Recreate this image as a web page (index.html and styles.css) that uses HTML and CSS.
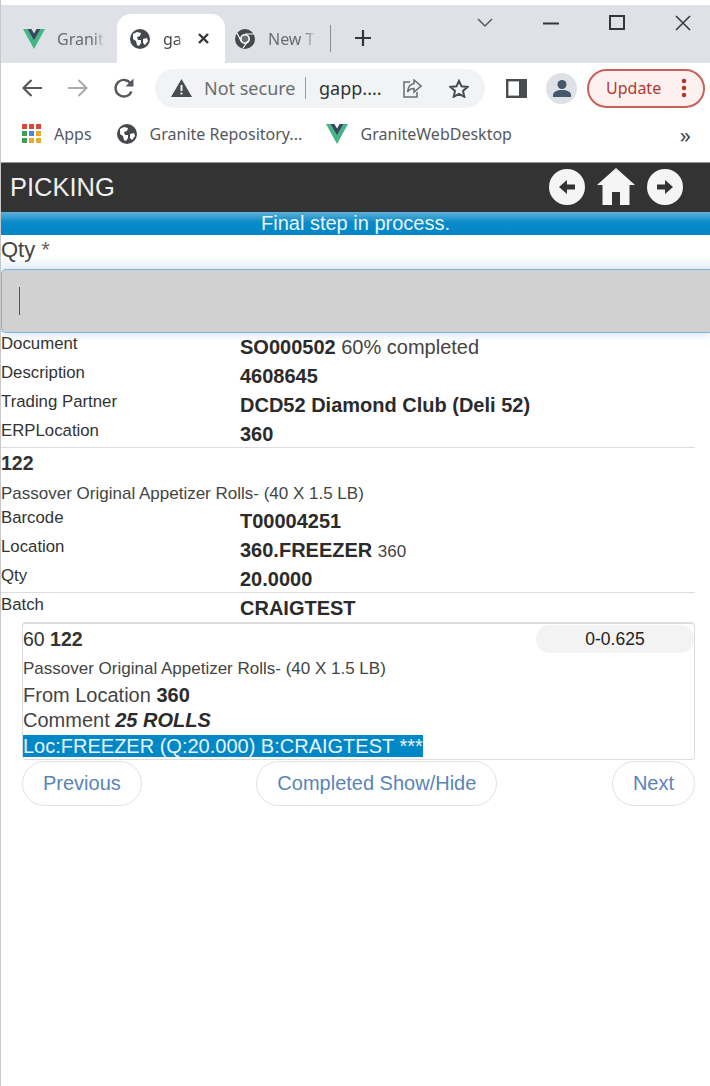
FILE: index.html
```html
<!DOCTYPE html>
<html lang="en">
<head>
  <meta charset="UTF-8" />
  <meta name="viewport" content="width=device-width, initial-scale=1.0" />
  <title>Picking</title>
  <link rel="stylesheet" href="styles.css">
</head>
<body>
  <svg class="defs" width="0" height="0">
    <symbol id="vue" viewBox="0 0 22 20">
      <path fill="#41b883" d="M0 0h4.4L11 11.4 17.6 0H22L11 20z"/>
      <path fill="#35495e" d="M4.4 0h4L11 4.6 13.6 0h4L11 11.4z"/>
    </symbol>
    <symbol id="globe" viewBox="0 0 20 20">
      <circle cx="10" cy="10" r="10" fill="#45494d"/>
      <path fill="#fff" d="M3 5l4-2 4 1-1 3-3 1 1 3 3 0 0 3-2 3-2-1-1-4-3-2zM13 10l4-1 1 3-3 4-2-2z"/>
    </symbol>
  </svg>

  <div class="tabstrip">
    <div class="tab">
      <svg class="fav" width="22" height="20"><use href="#vue"/></svg>
      <span class="tab-title tab-first">Granit</span>
    </div>
    <div class="tab active">
      <svg class="fav" width="20" height="20"><use href="#globe"/></svg>
      <span class="tab-title tab-mid">ga</span>
      <svg class="tab-close" width="11" height="11" viewBox="0 0 11 11"><path d="M1 1l9 9M10 1l-9 9" stroke="#33373b" stroke-width="2.4"/></svg>
    </div>
    <div class="tab">
      <svg class="fav" width="20" height="20" viewBox="0 0 20 20">
        <circle cx="10" cy="10" r="10" fill="#45494d"/>
        <circle cx="10" cy="10" r="5" fill="#fff"/>
        <circle cx="10" cy="10" r="3.4" fill="#6b7075"/>
        <path d="M10 5h9M6 12L2 4M13 12l-5 7" stroke="#fff" stroke-width="1.2"/>
      </svg>
      <span class="tab-title tab-last">New T</span>
    </div>
    <span class="tab-sep"></span>
    <svg class="new-tab" width="18" height="18" viewBox="0 0 18 18"><path d="M9 1v16M1 9h16" stroke="#33373b" stroke-width="2.2"/></svg>
    <div class="win-controls">
      <svg width="16" height="10" viewBox="0 0 16 10"><path d="M1 1l7 7 7-7" fill="none" stroke="#55595d" stroke-width="1.5"/></svg>
      <svg width="16" height="3" viewBox="0 0 16 3"><path d="M0 1.5h16" stroke="#33373b" stroke-width="2"/></svg>
      <svg width="16" height="16" viewBox="0 0 16 16"><rect x="1" y="1" width="14" height="13" fill="none" stroke="#33373b" stroke-width="2"/></svg>
      <svg width="16" height="16" viewBox="0 0 16 16"><path d="M1 1l14 14M15 1L1 15" stroke="#33373b" stroke-width="1.5"/></svg>
    </div>
  </div>

  <div class="toolbar">
    <svg class="tool-back" width="22" height="20" viewBox="0 0 22 20"><path d="M21 10H3M10.5 2L2.5 10l8 8" fill="none" stroke="#55595d" stroke-width="2.2"/></svg>
    <svg class="tool-forward" width="22" height="20" viewBox="0 0 22 20"><path d="M1 10h18M11.5 2l8 8-8 8" fill="none" stroke="#a9acaf" stroke-width="2"/></svg>
    <svg class="tool-reload" width="22" height="22" viewBox="0 0 22 22"><path d="M18.5 14.5a8.3 8.3 0 1 1-.8-8" fill="none" stroke="#55595d" stroke-width="2.4"/><path d="M20.5 1.5v8h-8z" fill="#55595d"/></svg>
    <div class="omnibox">
      <svg class="warn" width="21" height="18" viewBox="0 0 21 18"><path d="M10.5 0L21 18H0z" fill="#4a4d50"/><path d="M9.5 6h2v6h-2zM9.5 13.400h2v2h-2z" fill="#f1f3f4"/></svg>
      <span class="not-secure">Not secure</span>
      <span class="omni-sep"></span>
      <span class="url">gapp....</span>
      <svg class="share" width="20" height="19" viewBox="0 0 20 19"><path d="M8 3H2v15h13v-5" fill="none" stroke="#6a6d70" stroke-width="1.500"/><path d="M12 1l7 6-7 6V9.500c-3 0-5 1-6.500 3.500C6 8.500 8.500 5 12 4.500z" fill="none" stroke="#6a6d70" stroke-width="1.500"/></svg>
      <svg class="star" width="20" height="19" viewBox="0 0 20 19"><path d="M10 1.800l2.500 5.500 6 .6-4.500 4 1.300 5.900-5.300-3-5.300 3 1.300-5.900-4.500-4 6-.6z" fill="none" stroke="#4a4d50" stroke-width="2"/></svg>
    </div>
    <svg class="panel" width="21" height="19" viewBox="0 0 21 19"><rect x="1.200" y="1.200" width="18.600" height="16.600" fill="#fff" stroke="#4a4d50" stroke-width="2.400"/><rect x="13" y="1" width="7" height="17" fill="#4a4d50"/></svg>
    <div class="avatar">
      <svg width="18" height="17" viewBox="0 0 18 17"><circle cx="9" cy="4.500" r="4.500" fill="#45576b"/><path d="M0 17v-2c0-3 4-5 9-5s9 2 9 5v2z" fill="#45576b"/></svg>
    </div>
    <div class="update">
      <span>Update</span>
      <svg width="6" height="20" viewBox="0 0 6 20"><circle cx="3" cy="3" r="2.300" fill="#b3372f"/><circle cx="3" cy="10" r="2.300" fill="#b3372f"/><circle cx="3" cy="17" r="2.300" fill="#b3372f"/></svg>
    </div>
  </div>

  <div class="bookmarks">
    <svg class="apps" width="19" height="19" viewBox="0 0 19 19">
      <path fill="#d9473d" d="M0 0h5v5H0zM7 0h5v5H7zM14 0h5v5h-5z"/>
      <path fill="#3f9d58" d="M0 7h5v5H0z"/>
      <path fill="#4a86e0" d="M7 7h5v5H7z"/>
      <path fill="#e9ab2c" d="M14 7h5v5h-5zM7 14h5v5H7zM14 14h5v5h-5z"/>
      <path fill="#3f9d58" d="M0 14h5v5H0z"/>
    </svg>
    <span class="bm-apps">Apps</span>
    <svg class="bm-icon" width="20" height="20"><use href="#globe"/></svg>
    <span class="bm-repo">Granite Repository...</span>
    <svg class="bm-icon bm-vue" width="22" height="20"><use href="#vue"/></svg>
    <span>GraniteWebDesktop</span>
    <span class="bm-more">»</span>
  </div>

  <div class="app-header">
    <h1>PICKING</h1>
    <div class="nav-icons">
      <svg width="36" height="36" viewBox="0 0 36 36"><circle cx="18" cy="18" r="18" fill="#f5f5f5"/><path d="M10 18l8-7v4.500h8v5h-8V25z" fill="#333"/></svg>
      <svg width="38" height="37" viewBox="0 0 38 37"><path d="M19 0l19 17h-5.500v20H23V24h-8v13H5.500V17H0z" fill="#f5f5f5"/></svg>
      <svg width="36" height="36" viewBox="0 0 36 36"><circle cx="18" cy="18" r="18" fill="#f5f5f5"/><path d="M26 18l-8-7v4.500h-8v5h8V25z" fill="#333"/></svg>
    </div>
  </div>
  <div class="step-bar">Final step in process.</div>

  <div class="qty-label">Qty <span class="req">*</span></div>
  <div class="qty-input"><span class="caret"></span></div>

  <div class="row"><div class="lbl">Document</div><div class="val"><b>SO000502</b> 60% completed</div></div>
  <div class="row"><div class="lbl">Description</div><div class="val"><b>4608645</b></div></div>
  <div class="row"><div class="lbl">Trading Partner</div><div class="val"><b>DCD52 Diamond Club (Deli 52)</b></div></div>
  <div class="row"><div class="lbl">ERPLocation</div><div class="val"><b>360</b></div></div>
  <div class="divider"></div>
  <div class="item-code"><b>122</b></div>
  <div class="item-desc">Passover Original Appetizer Rolls- (40 X 1.5 LB)</div>
  <div class="row"><div class="lbl">Barcode</div><div class="val"><b>T00004251</b></div></div>
  <div class="row"><div class="lbl">Location</div><div class="val"><b>360.FREEZER</b> <small>360</small></div></div>
  <div class="row row-short"><div class="lbl">Qty</div><div class="val"><b>20.0000</b></div></div>
  <div class="divider divider-tight"></div>
  <div class="row"><div class="lbl">Batch</div><div class="val"><b>CRAIGTEST</b></div></div>

  <div class="card">
    <div class="card-top">
      <div class="card-head">60 <b>122</b></div>
      <div class="badge">0-0.625</div>
    </div>
    <div class="card-desc">Passover Original Appetizer Rolls- (40 X 1.5 LB)</div>
    <div class="card-line">From Location <b>360</b></div>
    <div class="card-line">Comment <b><i>25 ROLLS</i></b></div>
    <div class="card-line card-loc"><span class="hilite">Loc:FREEZER (Q:20.000) B:CRAIGTEST ***</span></div>
  </div>

  <div class="buttons">
    <a class="btn">Previous</a>
    <a class="btn">Completed Show/Hide</a>
    <a class="btn">Next</a>
  </div>
</body>
</html>
```

FILE: styles.css
```css
* {
  margin: 0;
  padding: 0;
  box-sizing: border-box;
}

html, body {
  height: 100%;
  overflow: hidden;
}

body {
  font-family: 'Liberation Sans', Arial, sans-serif;
  color: #333;
  background: #fff;
  border-left: 1px solid #c8c8c8;
}

.defs {
  position: absolute;
}

svg {
  display: block;
  flex: none;
}

/* browser chrome */
.tabstrip {
  height: 58px;
  margin-top: 5px;
  background: #dee1e6;
  display: flex;
  align-items: flex-end;
  font-family: 'Noto Sans', sans-serif;
  font-size: 16px;
  color: #6a6d70;
}

.tab {
  height: 49px;
  display: flex;
  align-items: center;
}

.tab:first-child {
  width: 116px;
  padding-left: 22px;
}

.tab.active {
  width: 108px;
  padding-left: 13px;
  background: #fff;
  border-radius: 14px 14px 0 0;
  color: #44474a;
}

.tab:nth-child(3) {
  width: 105px;
  padding-left: 10px;
}

.tab-title {
  overflow: hidden;
  white-space: nowrap;
  mask-image: linear-gradient(90deg, #000 75%, transparent);
}

.tab-first {
  width: 48px;
  margin-left: 12px;
}

.tab-mid {
  width: 20px;
  margin-left: 13px;
}

.tab-last {
  width: 48px;
  margin-left: 13px;
}

.tab-close {
  margin-left: 15px;
}

.tab-sep {
  width: 1px;
  height: 27px;
  background: #8a8d90;
  margin-bottom: 11px;
}

.new-tab {
  margin: 0 0 16px 23px;
}

.win-controls {
  margin-left: auto;
  align-self: flex-start;
  height: 36px;
  padding-right: 19px;
  display: flex;
  align-items: center;
  gap: 50px;
}

.toolbar {
  height: 49px;
  display: flex;
  align-items: center;
  padding: 1px 4px 0 20px;
  font-family: 'Noto Sans', sans-serif;
}

.tool-forward {
  margin-left: 24px;
}

.tool-reload {
  margin-left: 24px;
}

.omnibox {
  width: 330px;
  height: 39px;
  margin-left: 20px;
  background: #f1f3f4;
  border-radius: 20px;
  display: flex;
  align-items: center;
  padding-left: 16px;
}

.not-secure {
  width: 91px;
  margin-left: 12px;
  white-space: nowrap;
  font-size: 18px;
  color: #6a6d70;
}

.omni-sep {
  width: 1px;
  height: 22px;
  margin-left: 10px;
  background: #9a9d9f;
}

.url {
  width: 64px;
  margin-left: 13px;
  font-size: 18px;
  color: #333;
  white-space: nowrap;
}

.share {
  margin-left: 19px;
}

.star {
  margin-left: 27px;
}

.panel {
  margin-left: 21px;
}

.avatar {
  width: 31px;
  height: 31px;
  margin-left: 19px;
  border-radius: 50%;
  background: #dee1e6;
  display: flex;
  align-items: center;
  justify-content: center;
}

.update {
  width: 118px;
  height: 39px;
  margin-left: 10px;
  border: 2px solid #c9605a;
  border-radius: 20px;
  background: #fdf1f0;
  display: flex;
  align-items: center;
  justify-content: space-between;
  padding: 0 16px 0 17px;
  font-size: 16px;
  color: #b3372f;
}

.bookmarks {
  height: 43px;
  display: flex;
  align-items: center;
  padding-left: 21px;
  font-family: 'Noto Sans', sans-serif;
  font-size: 16px;
  color: #55595d;
  white-space: nowrap;
}

.bm-apps {
  margin: 0 25px 0 13px;
}

.bm-icon {
  margin-right: 13px;
}

.bm-repo {
  width: 153px;
  margin-right: 23px;
}

.bm-more {
  margin-left: auto;
  margin-right: 19px;
  font-size: 22px;
  line-height: 22px;
  color: #44474a;
}

/* app */
.app-header {
  height: 50px;
  margin-top: 7px;
  background: #333;
  border-top: 1px solid #999;
  display: flex;
  align-items: center;
  justify-content: space-between;
  padding: 0 27px 0 9px;
}

.app-header h1 {
  font-size: 25.500px;
  font-weight: normal;
  color: #f0f0f0;
}

.nav-icons {
  display: flex;
  align-items: center;
  gap: 12px;
  margin-top: -2px;
}

.step-bar {
  height: 23px;
  background: linear-gradient(#5fb0d8, #0a8ac8 45%, #0088c6);
  color: #e8f4fb;
  font-size: 20px;
  line-height: 23px;
  text-align: center;
}

.qty-label {
  height: 34px;
  padding-top: 3px;
  font-size: 22px;
  line-height: 24px;
  color: #444;
  background: linear-gradient(#fff 60%, #e6eff8);
}

.req {
  color: #666;
}

.qty-input {
  height: 64px;
  background: #d1d1d1;
  border: 1px solid #7fb2dc;
  border-right: 0;
  border-radius: 5px 0 0 5px;
  box-shadow: 0 3px 6px rgba(120, 170, 220, .25);
  display: flex;
  align-items: center;
  padding-left: 17px;
}

.caret {
  width: 1px;
  height: 28px;
  background: #555;
}

.row {
  height: 29px;
  display: flex;
  padding-top: 2px;
}

.row-short {
  height: 27px;
}

.lbl {
  width: 239px;
  flex: none;
  font-size: 16.800px;
  line-height: 18px;
  color: #333;
}

.val {
  padding-top: 1px;
  font-size: 20px;
  line-height: 22px;
  color: #444;
  white-space: nowrap;
}

.val b {
  color: #2b2b2b;
}

.val small {
  font-size: 17px;
}

.divider {
  height: 1px;
  margin: -2px 15px 0 0;
  background: #ddd;
}

.divider-tight {
  margin-top: 0;
  margin-bottom: 1px;
}

.item-code {
  height: 32px;
  padding-top: 4px;
  font-size: 19.500px;
  line-height: 22px;
}

.item-desc {
  height: 27px;
  padding-top: 5px;
  font-size: 17px;
  line-height: 18px;
  color: #444;
}

.card {
  height: 138px;
  margin: -1px 15px 0 21px;
  padding-top: 2px;
  border: 1px solid #ddd;
  border-top-width: 2px;
  border-radius: 4px;
}

.card-top {
  display: flex;
  justify-content: space-between;
}

.card-head {
  font-size: 19.500px;
  line-height: 26px;
}

.badge {
  width: 158px;
  height: 28px;
  margin-top: -1px;
  background: #f3f3f3;
  border-radius: 14px;
  font-size: 17.500px;
  line-height: 28px;
  text-align: center;
  color: #222;
}

.card-desc {
  margin-top: 4px;
  height: 26px;
  font-size: 17px;
  line-height: 24px;
  color: #444;
}

.card-line {
  height: 25px;
  font-size: 20px;
  line-height: 25px;
  color: #444;
}

.card-line b {
  color: #2b2b2b;
}

.card-loc {
  margin-top: 1px;
}

.hilite {
  display: inline-block;
  height: 22px;
  line-height: 22px;
  background: #0088c6;
  color: #e8f4fb;
}

.buttons {
  display: flex;
  justify-content: space-between;
  margin: 1px 15px 0 21px;
}

.btn {
  height: 45px;
  padding: 0 20px;
  border: 1px solid #e2e2e2;
  border-radius: 23px;
  font-size: 20px;
  line-height: 43px;
  color: #5a84b8;
}
```
